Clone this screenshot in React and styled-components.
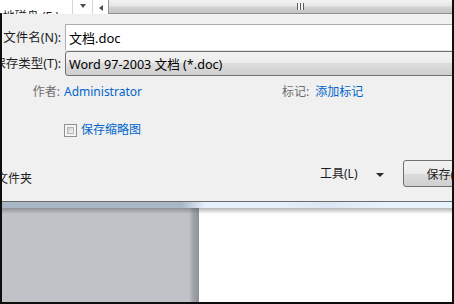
import styled, { createGlobalStyle } from "styled-components"

const GlobalStyle = createGlobalStyle`
  html, body {
    margin: 0;
    padding: 0;
    background: #0e0e0e;
  }
  body {
    font-family: "Noto Sans", "Noto Sans CJK SC", sans-serif;
    font-size: 12px;
  }
`

const Frame = styled.div`
  width: 454px;
  height: 304px;
  box-sizing: border-box;
  padding: 0 2px 2px 0;
  background: #0e0e0e;
  display: flex;
  flex-direction: column;
  overflow: hidden;
`

const TopStrip = styled.div`
  height: 14px;
  display: flex;
  flex-shrink: 0;
  background: #ffffff;
`

// Clips its text on the left, keeping the end of the text visible
const ClipRight = styled.div`
  width: ${(props) => props.width}px;
  flex-shrink: 0;
  display: flex;
  justify-content: flex-end;
  overflow: hidden;
  white-space: nowrap;
  box-sizing: border-box;

  & > span {
    flex-shrink: 0;
  }
`

const DriveCell = styled(ClipRight)`
  padding-top: 9px;
  padding-right: 13px;
  line-height: 16px;
  color: #1b1b1b;
`

const ArrowCell = styled.div`
  width: ${(props) => props.width}px;
  border-left: 1px solid #d5d5d5;
  box-sizing: border-box;
  display: flex;
  justify-content: center;
  padding-top: 4px;
`

const DownArrow = styled.div`
  width: 0;
  height: 0;
  border-left: 3px solid transparent;
  border-right: 3px solid transparent;
  border-top: 4px solid #4d4d4d;
`

const LeftArrow = styled.div`
  width: 0;
  height: 0;
  margin-top: 1px;
  border-top: 3px solid transparent;
  border-bottom: 3px solid transparent;
  border-right: 4px solid #4d4d4d;
`

const ScrollThumb = styled.div`
  flex: 1;
  display: flex;
  justify-content: center;
  padding-left: 40px;
  box-sizing: border-box;
  border-left: 1px solid #9a9a9a;
  border-bottom: 1px solid #8e8e8e;
  background: linear-gradient(#f3f3f3 0%, #e6e6e6 45%, #d2d2d2 55%, #c4c4c4 100%);
`

const Grip = styled.div`
  width: 7px;
  height: 7px;
  margin-top: 3px;
  background: repeating-linear-gradient(
    90deg,
    #5c5c5c 0px,
    #5c5c5c 1px,
    #f4f4f4 1px,
    #f4f4f4 3px
  );
`

const Dialog = styled.div`
  height: 188px;
  flex-shrink: 0;
  box-sizing: border-box;
  margin-left: 2px;
  background: #f0f0f0;
  border-bottom: 1px solid #6b6b6b;
  overflow: hidden;
  display: flex;
  flex-direction: column;
`

const FieldRow = styled.div`
  display: flex;
  align-items: center;
  margin-top: ${(props) => props.top || 0}px;
  height: ${(props) => props.height}px;
`

const Label = styled(ClipRight)`
  padding-right: 1px;
  color: #1e1e1e;
  font-size: 12.5px;
  line-height: 16px;
`

const TextBox = styled.div`
  flex: 1;
  height: 100%;
  margin-left: 3px;
  margin-right: -10px;
  box-sizing: border-box;
  background: #ffffff;
  border: 1px solid #abadb3;
  border-bottom-color: #e3e9ef;
  padding-left: 3px;
  display: flex;
  align-items: center;
  font-size: 13px;
  color: #000;
`

const Combo = styled.div`
  flex: 1;
  height: 100%;
  margin-left: 3px;
  margin-right: -10px;
  box-sizing: border-box;
  border: 1px solid #707070;
  border-radius: 3px;
  padding-left: 3px;
  display: flex;
  align-items: center;
  font-size: 12.6px;
  color: #000;
  background: linear-gradient(#f3f3f3 0%, #ebebeb 50%, #dddddd 50%, #cfcfcf 100%);
`

const MetaLabel = styled.div`
  width: ${(props) => (props.width ? `${props.width}px` : "auto")};
  flex-shrink: 0;
  padding-right: ${(props) => (props.width ? 2 : 0)}px;
  box-sizing: border-box;
  text-align: right;
  color: #6d6d6d;
  line-height: 16px;
  white-space: nowrap;
`

const LinkText = styled.span`
  display: inline-block;
  flex-shrink: 0;
  width: ${(props) => (props.width ? `${props.width}px` : "auto")};
  margin-left: ${(props) => props.gap || 2}px;
  color: #0066cc;
  line-height: 16px;
  white-space: nowrap;
`

const CheckBox = styled.div`
  width: 13px;
  height: 13px;
  margin-left: 62px;
  box-sizing: border-box;
  border: 1px solid #8f8f8f;
  background: #f4f4f4;
  padding: 2px;

  &::after {
    content: "";
    display: block;
    width: 100%;
    height: 100%;
    box-sizing: border-box;
    border: 1px solid #b4b4b4;
    background: linear-gradient(135deg, #cbcbcb, #f7f7f7);
  }
`

const Footer = styled.div`
  display: flex;
  align-items: center;
  height: 27px;
  margin-top: 22px;

  & > * {
    flex-shrink: 0;
  }
`

const FolderToggle = styled(ClipRight)`
  align-self: flex-end;
  line-height: 16px;
  color: #1e1e1e;
`

const ToolsLabel = styled.div`
  margin-left: 288px;
  color: #1e1e1e;
  line-height: 16px;
  white-space: nowrap;
`

const ToolsArrow = styled.div`
  width: 0;
  height: 0;
  margin-left: 18px;
  margin-top: 2px;
  border-left: 4px solid transparent;
  border-right: 4px solid transparent;
  border-top: 4px solid #2b2b2b;
`

const SaveButton = styled.div`
  height: 100%;
  width: 80px;
  margin-left: 19px;
  box-sizing: border-box;
  border: 1px solid #707070;
  border-radius: 3px;
  padding-left: 23px;
  display: flex;
  align-items: center;
  color: #1e1e1e;
  white-space: nowrap;
  background: linear-gradient(#f3f3f3 0%, #ebebeb 50%, #dddddd 50%, #cfcfcf 100%);
`

const Strip = styled.div`
  height: 6px;
  margin-left: 2px;
  flex-shrink: 0;
  background: linear-gradient(
    90deg,
    #a9b6c6 0%,
    #aab7c7 40%,
    #e6f0fb 45%,
    #e9f2fc 60%,
    #dbe6f2 72%,
    #e9f2fc 85%,
    #e9f2fc 100%
  );
`

const Panes = styled.div`
  flex: 1;
  margin-left: 2px;
  display: flex;
  position: relative;

  &::before {
    content: "";
    position: absolute;
    left: 0;
    right: 0;
    top: 0;
    height: 6px;
    background: linear-gradient(rgba(70, 70, 70, 0.4), rgba(70, 70, 70, 0));
  }
`

const NavPane = styled.div`
  width: 197px;
  background: linear-gradient(90deg, #bfc3c8 0%, #bfc3c8 95%, #a0a4a9 97%, #8d9196 100%);
`

const ContentPane = styled.div`
  flex: 1;
  background: #ffffff;
`

export default function App() {
  return (
    <>
      <GlobalStyle />
      <Frame>
        <TopStrip>
          <DriveCell width={72}>
            <span>本地磁盘 (E:)</span>
          </DriveCell>
          <ArrowCell width={20}>
            <DownArrow />
          </ArrowCell>
          <ArrowCell width={16}>
            <LeftArrow />
          </ArrowCell>
          <ScrollThumb>
            <Grip />
          </ScrollThumb>
        </TopStrip>
        <Dialog>
          <FieldRow top={10} height={27}>
            <Label width={60}>
              <span>文件名(N):</span>
            </Label>
            <TextBox>文档.doc</TextBox>
          </FieldRow>
          <FieldRow height={25}>
            <Label width={60}>
              <span>保存类型(T):</span>
            </Label>
            <Combo>Word 97-2003 文档 (*.doc)</Combo>
          </FieldRow>
          <FieldRow top={8} height={16}>
            <MetaLabel width={60}>作者:</MetaLabel>
            <LinkText width={218}>Administrator</LinkText>
            <MetaLabel>标记:</MetaLabel>
            <LinkText gap={6}>添加标记</LinkText>
          </FieldRow>
          <FieldRow top={22} height={16}>
            <CheckBox />
            <LinkText gap={4}>保存缩略图</LinkText>
          </FieldRow>
          <Footer>
            <FolderToggle width={30}>
              <span>隐藏文件夹</span>
            </FolderToggle>
            <ToolsLabel>工具(L)</ToolsLabel>
            <ToolsArrow />
            <SaveButton>保存(S)</SaveButton>
          </Footer>
        </Dialog>
        <Strip />
        <Panes>
          <NavPane />
          <ContentPane />
        </Panes>
      </Frame>
    </>
  )
}
